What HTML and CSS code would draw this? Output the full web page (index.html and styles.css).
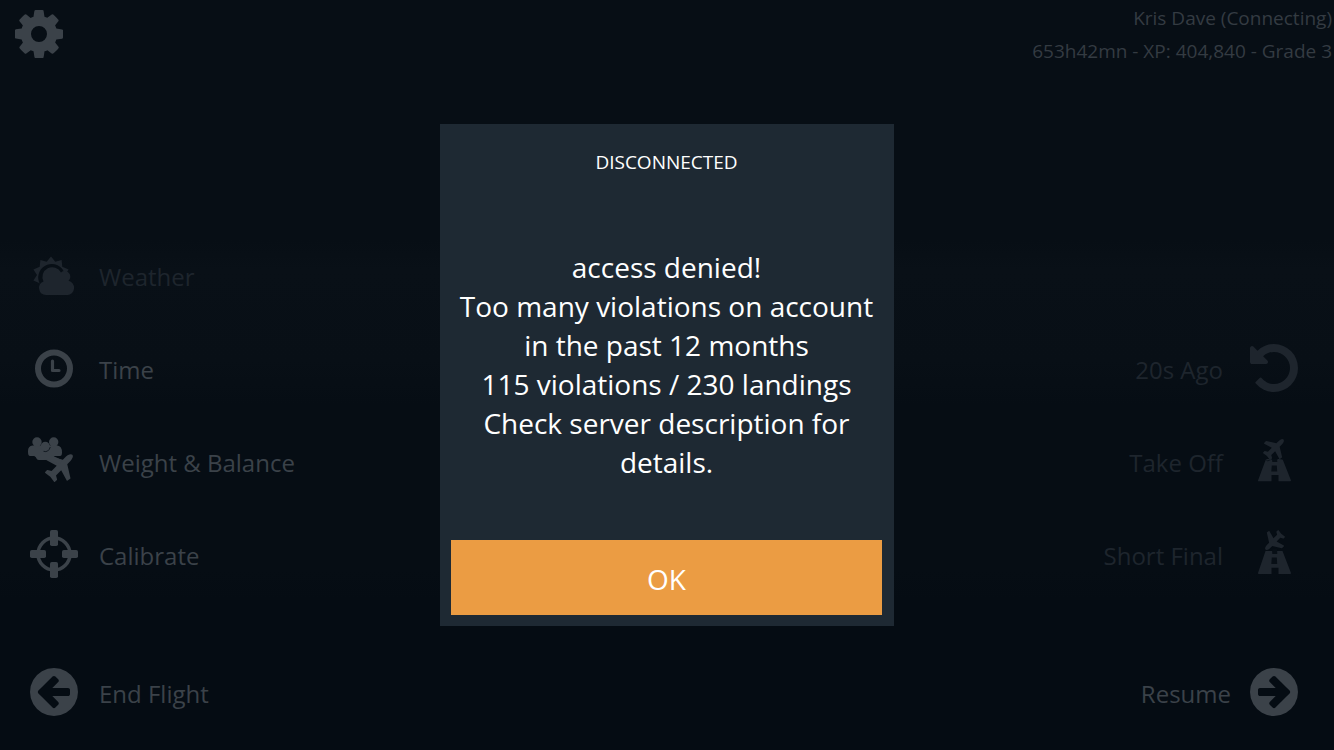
FILE: index.html
```html
<!DOCTYPE html>
<html lang="en">
<head>
<meta charset="utf-8">
<meta name="viewport" content="width=device-width, initial-scale=1">
<title>Flight menu</title>
<link rel="stylesheet" href="styles.css">
</head>
<body>
<svg class="defs" aria-hidden="true">
  <symbol id="plane" viewBox="192 128 1408 1408"><path d="M1568 160q44 52 12 148t-108 172l-161 161 160 696q5 19-12 33l-128 96q-7 6-19 6-4 0-7-1-15-3-21-16l-279-508-259 259 53 194q5 17-8 31l-96 96q-9 9-23 9h-2q-15-2-24-13l-189-252-252-189q-11-7-13-23-1-13 9-25l96-97q9-9 23-9 6 0 8 1l194 53 259-259-508-279q-14-8-17-24-2-16 9-27l128-128q14-13 30-8l665 159 160-160q76-76 172-108t148 12z"/></symbol>
  <symbol id="arrow" viewBox="128 128 1536 1536"><path d="M1408 960v-128q0-26-19-45t-45-19h-502l189-189q19-19 19-45t-19-45l-91-91q-18-18-45-18t-45 18l-362 362-91 91q-18 18-18 45t18 45l91 91 362 362q18 18 45 18t45-18l91-91q18-18 18-45t-18-45l-189-189h502q26 0 45-19t19-45zm256-64q0 209-103 385.500t-279.500 279.500-385.500 103-385.500-103-279.500-279.500-103-385.500 103-385.500 279.500-279.500 385.500-103 385.500 103 279.500 279.500 103 385.500z"/></symbol>
</svg>
<div class="screen">
  <header class="top">
    <button class="settings" type="button" aria-label="Settings">
      <svg class="icon" viewBox="0 -128 1536 1536"><path fill-rule="evenodd" d="M1024 640q0 106-75 181t-181 75-181-75-75-181 75-181 181-75 181 75 75 181zm512-109v222q0 12-8 23t-20 13l-185 28q-19 54-39 91 35 50 107 138 10 12 10 25t-9 23q-27 37-99 108t-94 71q-12 0-26-9l-138-108q-44 23-91 38-16 136-29 186-7 28-36 28h-222q-14 0-24.500-8.500t-11.500-21.500l-28-184q-49-16-90-37l-141 107q-10 9-25 9-14 0-25-11-126-114-165-168-7-10-7-23 0-12 8-23 15-21 51-66.500t54-70.500q-27-50-41-99l-183-27q-13-2-21-12.500t-8-23.500v-222q0-12 8-23t19-13l186-28q14-46 39-92-40-57-107-138-10-12-10-24 0-10 9-23 26-36 98.500-107.500t94.500-71.500q13 0 26 10l138 107q44-23 91-38 16-136 29-186 7-28 36-28h222q14 0 24.500 8.500t11.500 21.500l28 184q49 16 90 37l142-107q9-9 24-9 13 0 25 10 129 119 165 170 7 8 7 22 0 12-8 23-15 21-51 66.500t-54 70.500q26 50 41 98l183 28q13 2 21 12.500t8 23.500z"/></svg>
    </button>
    <div class="pilot">
      <p>Kris Dave (Connecting)</p>
      <p>653h42mn - XP: 404,840 - Grade 3</p>
    </div>
  </header>

  <main class="menus">
    <nav class="menu" aria-label="Flight options">
      <button class="item" type="button" disabled>
        <svg class="icon" viewBox="0 0 48 48">
          <path d="M21 5.500l4.300 5.200 6.300-1.800.7 6.900 6.300 2.600L35 24l-4 9H10l-.3-.8-6.300-2.600L7 24l-3.600-5.600 6.300-2.600.7-6.900 6.300 1.800z"/>
          <path d="M9 31a13 13 0 1 1 25.500-9l5 6-2 12H14z" class="hole"/>
          <path d="M16 44a7 7 0 0 1-2.500-13.500A9.500 9.500 0 0 1 31 21.500a5.500 5.500 0 0 1 7.500 8.300A7.200 7.200 0 0 1 37.500 44z"/>
        </svg>
        <span>Weather</span>
      </button>
      <button class="item" type="button">
        <svg class="icon" viewBox="0 0 48 48">
          <circle cx="24" cy="24.500" r="16" fill="none" stroke="currentColor" stroke-width="6"/>
          <path d="M22.500 17v9.500H29" fill="none" stroke="currentColor" stroke-width="3.200" stroke-linecap="round" stroke-linejoin="round"/>
        </svg>
        <span>Time</span>
      </button>
      <button class="item" type="button">
        <svg class="icon" viewBox="0 0 48 48">
          <use href="#plane" x="15" y="17" width="28" height="28"/>
          <path d="M-2 14q0-5 4.500-5.500h25q4.500 .5 4.500 7 0 3.500-2 3.500H24q0 3.500-3 4H9q-3 0-3-4H0q-2 0-2-4z"/>
          <path d="M3 18h18l11 5-2 4-16-5H8z"/>
          <circle cx="7" cy="5" r="4.700"/><circle cx="23.700" cy="5" r="4.700"/>
          <circle cx="15.300" cy="9.500" r="4.700"/>
          <path d="M13.500 14.300q5 1.500 6.800-4.300" class="seam"/>
        </svg>
        <span>Weight &amp; Balance</span>
      </button>
      <button class="item" type="button">
        <svg class="icon" viewBox="0 0 48 48">
          <circle cx="24" cy="24" r="16" fill="none" stroke="currentColor" stroke-width="3.500"/>
          <rect x="20" y="0" width="8" height="16" rx="1.800"/><rect x="20" y="32" width="8" height="16" rx="1.800"/>
          <rect x="0" y="20" width="16" height="8" rx="1.800"/><rect x="32" y="20" width="16" height="8" rx="1.800"/>
        </svg>
        <span>Calibrate</span>
      </button>
    </nav>

    <nav class="menu menu-end" aria-label="Replay positions">
      <button class="item" type="button" disabled>
        <svg class="icon" viewBox="128 128 1536 1536"><path d="M1664 896q0 156-61 298t-164 245-245 164-298 61q-172 0-327-72.500t-264-204.500q-7-10-6.500-22.500t8.500-20.500l137-138q10-9 25-9 16 2 23 12 73 95 179 147t225 52q104 0 198.500-40.500t163.500-109.500 109.500-163.500 40.500-198.500-40.500-198.500-109.500-163.500-163.500-109.500-198.500-40.500q-98 0-188 35.500t-160 101.500l137 138q31 30 14 69-17 40-59 40h-448q-26 0-45-19t-19-45v-448q0-42 40-59 39-17 69 14l130 129q107-101 244.500-156.500t284.500-55.500q156 0 298 61t245 164 164 245 61 298z"/></svg>
        <span>20s Ago</span>
      </button>
      <button class="item" type="button" disabled>
        <svg class="icon" viewBox="0 0 48 48">
          <path d="M16 22h16.500L41 43.500q0 .8-.8.800H28.500V38h-7v6.300H8.700q-.8 0-.7-.8z"/>
          <path d="M21.800 28.500h5l.4 6h-5.900zM22 22h5l.3 3h-5z" class="hole"/>
          <path d="M14 20.500 17.500 24l4.500-2 3 1.500 3.500-2 5 1" class="seam"/>
          <use href="#plane" x="13" y="2" width="21" height="21"/>
        </svg>
        <span>Take Off</span>
      </button>
      <button class="item" type="button" disabled>
        <svg class="icon" viewBox="0 0 48 48">
          <path d="M15.500 21h17L41 43q0 1-.8 1H28.500v-6.200h-7V44H8.700q-.8 0-.7-1z"/>
          <path d="M21.800 27.500h5l.4 6.500h-5.900zM22 19h5l.3 5h-5z" class="hole"/>
          <use href="#plane" x="14" y="0" width="20" height="20" transform="rotate(180 24.500 10)"/>
        </svg>
        <span>Short Final</span>
      </button>
    </nav>
  </main>

  <footer class="bottom">
    <button class="item" type="button">
      <svg class="icon"><use href="#arrow"/></svg>
      <span>End Flight</span>
    </button>
    <button class="item item-resume" type="button">
      <svg class="icon flip"><use href="#arrow"/></svg>
      <span>Resume</span>
    </button>
  </footer>
</div>

<div class="overlay">
  <section class="dialog" role="alertdialog" aria-modal="true" aria-labelledby="dialog-title" aria-describedby="dialog-text">
    <h1 class="dialog-title" id="dialog-title">DISCONNECTED</h1>
    <p class="dialog-text" id="dialog-text">access denied!<br>Too many violations on account<br>in the past 12 months<br>115 violations / 230 landings<br>Check server description for details.</p>
    <button class="ok" type="button">OK</button>
  </section>
</div>
</body>
</html>
```
FILE: styles.css
```css
* {
  box-sizing: border-box;
}

body {
  margin: 0;
  background: #060d14;
  color: #3b4249;
  font-family: "Open Sans", "Noto Sans", sans-serif;
}

p,
h1 {
  margin: 0;
  font-weight: 400;
}

button {
  border: 0;
  padding: 0;
  background: none;
  color: inherit;
  font: inherit;
}

.defs {
  position: absolute;
  width: 0;
  height: 0;
}

.screen {
  display: flex;
  flex-direction: column;
  min-height: 100vh;
  background: linear-gradient(#070e15 0%, #070e15 32%, #091017 36%, #080f16 48%, #060d14 54%, #060d14 76%, #050c13 80%, #050c13 100%);
}

.top {
  display: flex;
  justify-content: space-between;
  align-items: flex-start;
  padding: 2px 2px 0 15px;
}

.settings {
  display: block;
  margin-top: 8px;
}

.icon {
  display: block;
  flex: none;
  width: 48px;
  height: 48px;
  fill: currentColor;
  overflow: visible;
}

.flip {
  transform: scaleX(-1);
}

.hole {
  fill: #080f16;
}

.seam {
  fill: none;
  stroke: #080f16;
  stroke-width: 0.8;
}

.pilot {
  color: #343b42;
  font-size: 19px;
  line-height: 33px;
  text-align: right;
}

.menus {
  display: flex;
  flex: 1;
  justify-content: space-between;
  align-items: flex-end;
  padding: 0 36px 0 30px;
}

.menu {
  display: flex;
  flex-direction: column;
  gap: 45px;
}

.item {
  display: flex;
  align-items: center;
  gap: 21px;
  font-size: 24px;
  line-height: 44px;
}

.item span {
  padding-top: 3px;
}

.item:disabled {
  color: #1e252d;
}

.menu-end .item {
  flex-direction: row-reverse;
  gap: 27px;
}

.bottom {
  display: flex;
  justify-content: space-between;
  padding: 90px 36px 34px 30px;
}

.item-resume {
  flex-direction: row-reverse;
  gap: 19px;
}

.overlay {
  position: fixed;
  inset: 0;
  display: flex;
  align-items: center;
  justify-content: center;
}

.dialog {
  display: flex;
  flex-direction: column;
  width: 34%;
  min-width: 440px;
  padding: 24px 12px 11px 11px;
  background: #1e2933;
  color: #fff;
  text-align: center;
}

.dialog-title {
  font-size: 19px;
  line-height: 28px;
}

.dialog-text {
  padding: 72px 0 58px;
  font-size: 28px;
  line-height: 39px;
}

.ok {
  padding: 20px 0 16px;
  background: #eb9c43;
  color: #fff;
  font-size: 28px;
  line-height: 39px;
}
```
